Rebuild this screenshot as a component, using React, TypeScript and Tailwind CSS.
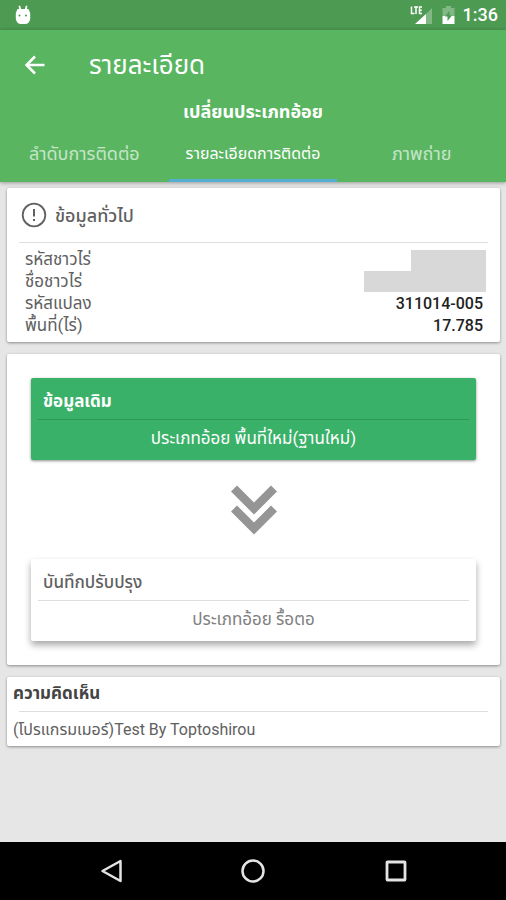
import React, { useState } from "react";

const tabs = ["ลำดับการติดต่อ", "รายละเอียดการติดต่อ", "ภาพถ่าย"];

const plotInfo = [
  { label: "รหัสชาวไร่", value: "", mask: "w-[75px] self-end" },
  { label: "ชื่อชาวไร่", value: "", mask: "w-[122px] self-start" },
  { label: "รหัสแปลง", value: "311014-005", mask: "" },
  { label: "พื้นที่(ไร่)", value: "17.785", mask: "" },
];

const StatusBar: React.FC = () => (
  <div className="flex h-[30px] items-center justify-between bg-[#4d9a52] pl-[15px] pr-2 text-white">
    <svg width="16" height="20" viewBox="0 0 16 20" aria-hidden="true">
      <path
        d="M4.500 1.500 5.500 5M11.500 1.500 10.500 5"
        stroke="#fff"
        strokeWidth="1.800"
        strokeLinecap="round"
      />
      <path
        d="M2.500 4h11l1.700 4v6q-1 5-5 5H5.800q-4 0-5-5V8z"
        fill="#fff"
      />
      <circle cx="4.500" cy="10.500" r="1" fill="#4d9a52" />
      <circle cx="11" cy="10.500" r="1" fill="#4d9a52" />
    </svg>
    <div className="flex items-center">
      <svg width="24" height="20" viewBox="0 0 24 20" aria-hidden="true">
        <path d="M22 3v16H6z" fill="#fff" fillOpacity="0.3" />
        <path d="M16 9v10H5z" fill="#fff" />
        <path
          d="M1.500 1.500v7h3M4 2h4M6 2v7M12 2H9.500v6.500H12M9.500 5.200h2.300"
          fill="none"
          stroke="#fff"
          strokeWidth="1.500"
        />
      </svg>
      <svg
        className="ml-2"
        width="13"
        height="20"
        viewBox="0 0 13 20"
        aria-hidden="true"
      >
        <path d="M4 1h5v2h3.500v8H.5V3H4z" fill="#fff" fillOpacity="0.300" />
        <path d="M.5 11h12v8H.5z" fill="#fff" />
        <path d="M7.500 6v4.500H10L5.500 16v-4.500H3z" fill="#4d9a52" />
      </svg>
      <span className="ml-2 text-[18px] font-medium leading-5">1:36</span>
    </div>
  </div>
);

const Card: React.FC<{ className?: string; children: React.ReactNode }> = ({
  className = "",
  children,
}) => (
  <section
    className={`rounded-[2px] bg-white shadow-[0_1px_3px_rgba(0,0,0,0.4)] ${className}`}
  >
    {children}
  </section>
);

const App: React.FC = () => {
  const [activeTab, setActiveTab] = useState<number>(1);

  return (
    <div className="flex min-h-screen w-full flex-col bg-[#e6e6e6] font-[Roboto,'Noto_Sans_Thai','Noto_Sans',sans-serif] text-[#606060]">
      <StatusBar />

      <header className="bg-[#59b560] text-white shadow-[0_1px_4px_rgba(0,0,0,0.35)]">
        <div className="flex h-[70px] items-center pl-6">
          <button type="button" aria-label="Back" className="cursor-pointer">
            <svg width="22" height="22" viewBox="0 0 22 22" fill="none">
              <path
                d="M20.500 11H3M11 2.500 2.500 11l8.500 8.500"
                stroke="#fff"
                strokeWidth="2.500"
              />
            </svg>
          </button>
          <h1 className="ml-[43px] text-[26px] leading-8">รายละเอียด</h1>
        </div>
        <h2 className="text-center text-[18px] font-bold leading-6">
          เปลี่ยนประเภทอ้อย
        </h2>
        <div role="tablist" className="grid h-[58px] grid-cols-3">
          {tabs.map((tab, i) => (
            <button
              key={tab}
              type="button"
              role="tab"
              aria-selected={activeTab === i}
              onClick={() => setActiveTab(i)}
              className={`cursor-pointer whitespace-nowrap border-b-[3px] pt-1 ${
                activeTab === i
                  ? "border-[#55aed0] text-[16px] text-white"
                  : "border-transparent text-[18px] text-white/65"
              }`}
            >
              {tab}
            </button>
          ))}
        </div>
      </header>

      <main className="flex flex-col gap-3 py-[6px] pl-[7px] pr-[6px]">
        <Card className="px-3 pb-[5px]">
          <div className="flex h-[55px] items-center gap-2 border-b border-[#dedede] pl-[2px]">
            <svg width="26" height="26" viewBox="0 0 26 26" aria-hidden="true">
              <circle
                cx="13"
                cy="13"
                r="11.300"
                fill="none"
                stroke="#606060"
                strokeWidth="1.800"
              />
              <path d="M13 7v7.500M13 17v2" stroke="#606060" strokeWidth="2" />
            </svg>
            <h3 className="text-[18px] font-medium">ข้อมูลทั่วไป</h3>
          </div>
          <dl className="pl-[6px] pr-[2px] pt-[6px]">
            {plotInfo.map((row) => (
              <div key={row.label} className="flex h-[22px] items-center justify-between">
                <dt className="text-[17px]">{row.label}</dt>
                {row.mask ? (
                  <dd className={`h-[21px] bg-[#d8d8d8] ${row.mask}`} />
                ) : (
                  <dd className="pr-[3px] text-[16px] font-medium text-[#222]">
                    {row.value}
                  </dd>
                )}
              </div>
            ))}
          </dl>
        </Card>

        <Card className="p-6">
          <div className="rounded-[2px] bg-[#39b168] px-[7px] text-white shadow-[0_1px_3px_rgba(0,0,0,0.45)]">
            <h3 className="flex h-[42px] items-center border-b border-[#2f9859] px-[5px] pt-[6px] text-[17px] font-bold">
              ข้อมูลเดิม
            </h3>
            <p className="h-10 text-center text-[17px] leading-9">
              ประเภทอ้อย พื้นที่ใหม่(ฐานใหม่)
            </p>
          </div>
          <div className="flex h-[99px] items-center justify-center">
            <svg width="46" height="50" viewBox="0 0 46 50" aria-hidden="true">
              <path
                d="M3 3.500 23 23.500l20-20M3 23.500l20 20 20-20"
                fill="none"
                stroke="#959595"
                strokeWidth="8.500"
              />
            </svg>
          </div>
          <div className="rounded-[2px] bg-white px-[7px] shadow-[0_4px_7px_rgba(0,0,0,0.35)]">
            <h3 className="flex h-[42px] items-center border-b border-[#dedede] px-[5px] pt-[6px] text-[17px] font-medium">
              บันทึกปรับปรุง
            </h3>
            <p className="h-10 text-center text-[17px] leading-9 text-[#808080]">
              ประเภทอ้อย รื้อตอ
            </p>
          </div>
        </Card>

        <Card className="px-[6px]">
          <h3 className="flex h-[34px] items-center text-[17px] font-bold text-[#444]">
            ความคิดเห็น
          </h3>
          <hr className="mx-[6px] border-[#dedede]" />
          <p className="h-[34px] text-[16px] leading-9">
            (โปรแกรมเมอร์)Test By Toptoshirou
          </p>
        </Card>
      </main>

      <nav className="mt-auto grid h-[58px] grid-cols-[182fr_142fr_182fr] items-center bg-black">
        <button type="button" aria-label="Back" className="ml-[100px] w-6 cursor-pointer">
          <svg width="24" height="26" viewBox="0 0 24 26" fill="none">
            <path
              d="M20.500 3v20L2.500 13z"
              stroke="#e4e4e4"
              strokeWidth="2.500"
              strokeLinejoin="round"
            />
          </svg>
        </button>
        <button type="button" aria-label="Home" className="cursor-pointer justify-self-center">
          <svg width="26" height="26" viewBox="0 0 26 26" fill="none">
            <circle cx="13" cy="13" r="10.500" stroke="#e4e4e4" strokeWidth="2.500" />
          </svg>
        </button>
        <button
          type="button"
          aria-label="Recent apps"
          className="mr-[98px] cursor-pointer justify-self-end"
        >
          <svg width="24" height="24" viewBox="0 0 24 24" fill="none">
            <rect
              x="3"
              y="3"
              width="18"
              height="18"
              rx="0.500"
              stroke="#e4e4e4"
              strokeWidth="2.800"
            />
          </svg>
        </button>
      </nav>
    </div>
  );
};

export default App;
